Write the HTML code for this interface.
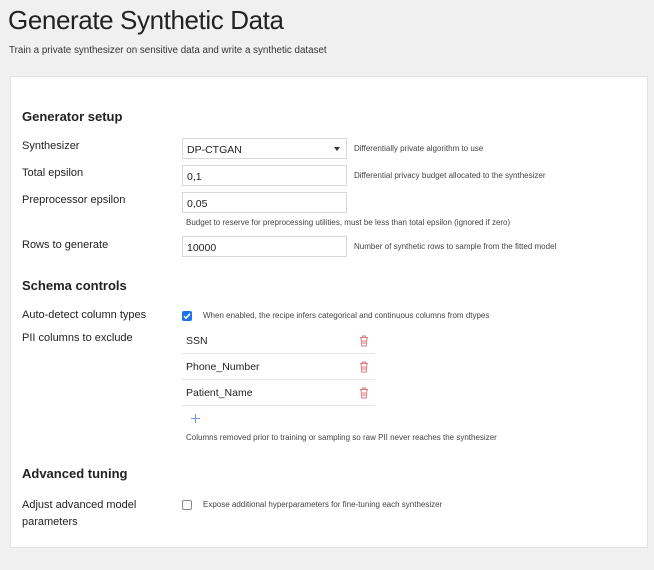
<!DOCTYPE html>
<html><head><meta charset="utf-8"><style>
*{margin:0;padding:0;box-sizing:border-box}
body{width:654px;height:570px;background:#f0f0f0;font-family:"Liberation Sans",sans-serif;color:#222;position:relative;overflow:hidden}
.a{position:absolute;white-space:nowrap}
h1{position:absolute;left:8px;top:5px;font-size:26px;font-weight:400;color:#222;letter-spacing:-0.4px}
.card{position:absolute;left:10px;top:76px;width:638px;height:472px;background:#fff;border:1px solid #e2e2e2}
.h{font-size:13px;font-weight:bold;color:#222}
.lbl{font-size:11px;color:#222}
.help{font-size:8px;color:#444}
.in{position:absolute;left:182px;width:165px;height:21px;border:1px solid #d8d8d8;background:#fff;font-size:10.5px;padding:5px 0 0 4px;color:#222}
.row{position:absolute;left:182px;width:193px;height:26px;border-bottom:1px solid #e6e6e6;font-size:10.5px;padding:7px 0 0 4px}
.cb{position:absolute;width:10px;height:10px;border-radius:2px}
</style></head><body>
<h1>Generate Synthetic Data</h1>
<div class="a" style="left:9px;top:45px;font-size:9.8px;color:#333">Train a private synthesizer on sensitive data and write a synthetic dataset</div>
<div class="card"></div>
<div class="a h" style="left:22px;top:109px">Generator setup</div>
<div class="a lbl" style="left:22px;top:140px">Synthesizer</div>
<div class="in" style="top:138px">DP-CTGAN<span style="position:absolute;right:6px;top:8px;width:0;height:0;border-left:3.5px solid transparent;border-right:3.5px solid transparent;border-top:4px solid #333"></span></div>
<div class="a help" style="left:354px;top:144px">Differentially private algorithm to use</div>
<div class="a lbl" style="left:22px;top:167px">Total epsilon</div>
<div class="in" style="top:165px">0,1</div>
<div class="a help" style="left:354px;top:171px">Differential privacy budget allocated to the synthesizer</div>
<div class="a lbl" style="left:22px;top:194px">Preprocessor epsilon</div>
<div class="in" style="top:192px">0,05</div>
<div class="a help" style="left:186px;top:218px">Budget to reserve for preprocessing utilities, must be less than total epsilon (ignored if zero)</div>
<div class="a lbl" style="left:22px;top:239px">Rows to generate</div>
<div class="in" style="top:236px">10000</div>
<div class="a help" style="left:354px;top:242px">Number of synthetic rows to sample from the fitted model</div>
<div class="a h" style="left:22px;top:278px">Schema controls</div>
<div class="a lbl" style="left:22px;top:309px">Auto-detect column types</div>
<div class="cb" style="left:182px;top:311px;background:#1a73e8"><svg width="10" height="10" viewBox="0 0 10 10" style="position:absolute;left:0;top:0"><path d="M2 5.2l2 2 4-4.4" stroke="#fff" stroke-width="1.6" fill="none"/></svg></div>
<div class="a help" style="left:203px;top:311px">When enabled, the recipe infers categorical and continuous columns from dtypes</div>
<div class="a lbl" style="left:22px;top:332px">PII columns to exclude</div>
<div class="row" style="top:328px">SSN</div>
<div class="row" style="top:354px">Phone_Number</div>
<div class="row" style="top:380px">Patient_Name</div>
<svg class="a" style="left:359px;top:335px" width="10" height="12" viewBox="0 0 10 12"><g stroke="#e07a7a" stroke-width="1" fill="none"><path d="M1 2.5h8M3.5 2.5V1h3v1.5M2 2.5l.7 8.5h4.6l.7-8.5M4 5v4M6 5v4"/></g></svg>
<svg class="a" style="left:359px;top:361px" width="10" height="12" viewBox="0 0 10 12"><g stroke="#e07a7a" stroke-width="1" fill="none"><path d="M1 2.5h8M3.5 2.5V1h3v1.5M2 2.5l.7 8.5h4.6l.7-8.5M4 5v4M6 5v4"/></g></svg>
<svg class="a" style="left:359px;top:387px" width="10" height="12" viewBox="0 0 10 12"><g stroke="#e07a7a" stroke-width="1" fill="none"><path d="M1 2.5h8M3.5 2.5V1h3v1.5M2 2.5l.7 8.5h4.6l.7-8.5M4 5v4M6 5v4"/></g></svg>
<svg class="a" style="left:191px;top:414px" width="9" height="9" viewBox="0 0 9 9"><path d="M4.5 0v9M0 4.5h9" stroke="#6a9ae8" stroke-width="1"/></svg>
<div class="a help" style="left:186px;top:433px">Columns removed prior to training or sampling so raw PII never reaches the synthesizer</div>
<div class="a h" style="left:22px;top:466px">Advanced tuning</div>
<div class="a lbl" style="left:22px;top:497px;line-height:17px;white-space:normal;width:140px">Adjust advanced model parameters</div>
<div class="cb" style="left:182px;top:500px;border:1px solid #888;background:#fff"></div>
<div class="a help" style="left:203px;top:500px">Expose additional hyperparameters for fine-tuning each synthesizer</div>
</body></html>
